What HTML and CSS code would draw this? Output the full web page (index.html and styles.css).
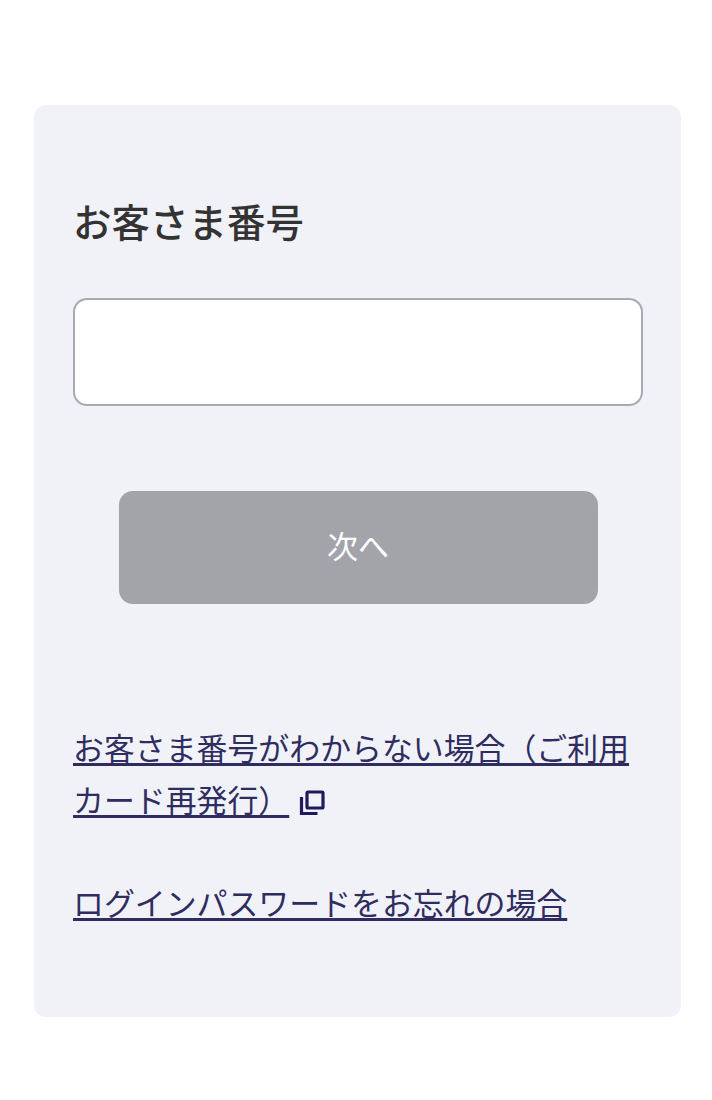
FILE: index.html
```html
<!DOCTYPE html>
<html lang="ja">
<head>
    <title>お客さま番号</title>
    <link rel="stylesheet" href="styles.css">
</head>
<body>
    <div class="card">
        <div class="card-title">お客さま番号</div>
        <input class="text-input" type="text">
        <div class="button-row">
            <button class="next-button" disabled>次へ</button>
        </div>
        <div class="link-list">
            <p class="link-line">
                <a class="link" href="#">お客さま番号がわからない場合（ご利用カード再発行）</a>
                <svg class="copy-icon" viewBox="0 0 26 26" width="26" height="26" fill="none" stroke="#1d1a5e" stroke-width="3.2">
                    <rect x="8" y="2" width="16" height="16" rx="1"/>
                    <path d="M2.500 7v16.500h16"/>
                </svg>
            </p>
            <p class="link-line">
                <a class="link" href="#">ログインパスワードをお忘れの場合</a>
            </p>
        </div>
    </div>
</body>
</html>
```

FILE: styles.css
```css
body {
    margin: 0;
    padding: 105px 31px 83px 34px;
    font-family: "Noto Sans CJK JP", "Noto Sans", sans-serif;
    background-color: #ffffff;
}
.card {
    height: 912px;
    box-sizing: border-box;
    padding: 86px 39px 0;
    background-color: #f1f2f8;
    border-radius: 12px;
}
.card-title {
    margin: 0 0 49px;
    font-size: 38.5px;
    line-height: 58px;
    font-weight: 500;
    color: #333333;
}
.text-input {
    display: block;
    width: 570px;
    height: 108px;
    box-sizing: border-box;
    background-color: #ffffff;
    border: 2px solid #a9a9b2;
    border-radius: 14px;
}
.button-row {
    display: flex;
    justify-content: center;
    margin-top: 85px;
    padding-left: 1px;
}
.next-button {
    width: 479px;
    height: 113px;
    padding: 0 0 6px;
    font-family: inherit;
    font-size: 31px;
    color: #ffffff;
    background-color: #a3a4a9;
    border: none;
    border-radius: 14px;
}
.link-list {
    margin-top: 117px;
}
.link-line {
    margin: 0 0 51px;
    font-size: 30.9px;
    line-height: 52px;
    color: #1d1a5e;
}
.link {
    color: #2f2d5f;
    text-decoration: underline;
    text-decoration-thickness: 2.5px;
    text-underline-offset: 3px;
}
.copy-icon {
    vertical-align: -4px;
    margin-left: 3px;
}
```
